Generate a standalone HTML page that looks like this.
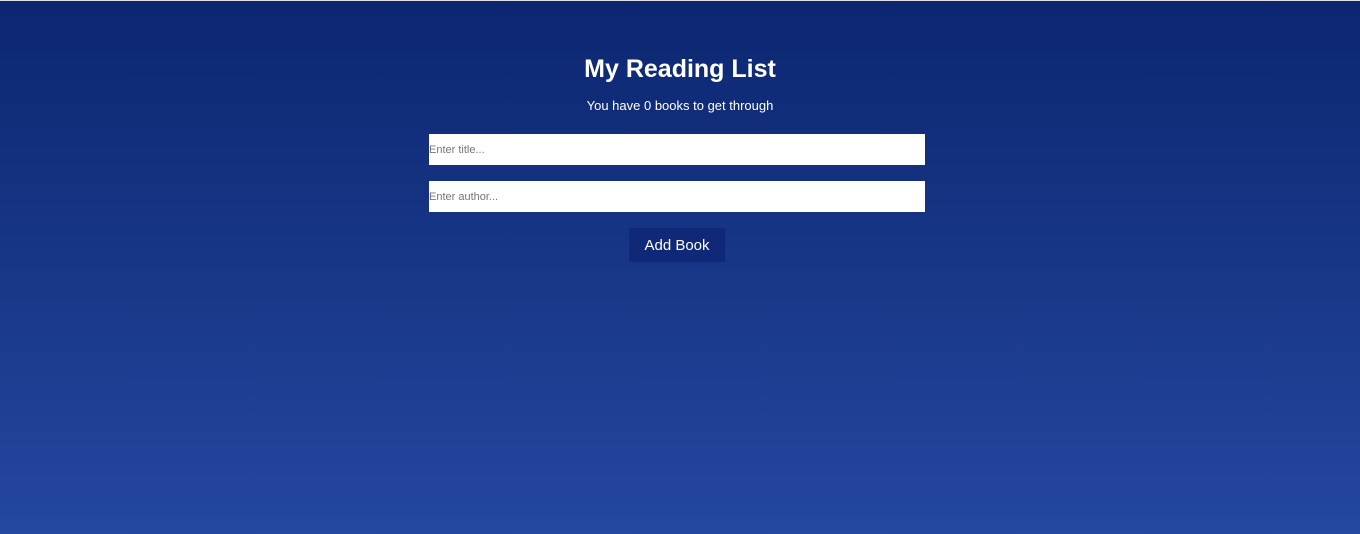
<!DOCTYPE html>
<html><head><style>
html,body{margin:0;height:534px;overflow:hidden}
body{background:linear-gradient(#0c2670,#24479f);border-top:1px solid #e0e0e0;box-sizing:border-box;font-family:"Liberation Sans",sans-serif;position:relative}
h1{position:absolute;top:52px;left:0;width:1360px;text-align:center;margin:0;color:#fff;font-size:25px;font-weight:bold;line-height:32px}
p{position:absolute;top:96px;left:0;width:1360px;text-align:center;margin:0;color:#fff;font-size:13px;line-height:17px}
.in{position:absolute;left:429px;width:496px;height:31px;background:#fff;color:#757575;font-size:11px;line-height:33px}
.btn{position:absolute;left:629px;top:227px;width:96px;height:34px;background:#0f2878;color:#fff;font-size:15px;line-height:36px;text-align:center}
</style></head><body>
<h1>My Reading List</h1>
<p>You have 0 books to get through</p>
<div class="in" style="top:133px">Enter title...</div>
<div class="in" style="top:180px">Enter author...</div>
<div class="btn">Add Book</div>
</body></html>
